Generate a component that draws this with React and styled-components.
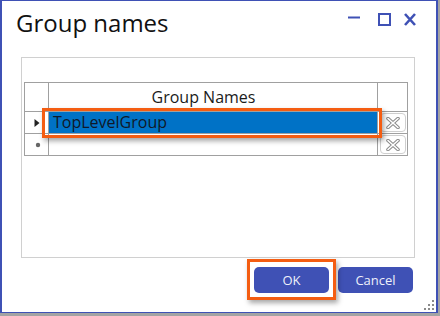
import styled, { createGlobalStyle } from 'styled-components'

const GlobalStyle = createGlobalStyle`
	html, body {
		margin: 0;
		padding: 0;
		background: #a3a3a3;
		font-family: 'Open Sans', 'Noto Sans', sans-serif;
	}
	* {
		box-sizing: border-box;
	}
`

const Window = styled.div`
	position: relative;
	width: 438px;
	height: 313px;
	background: #fff;
	border-style: solid;
	border-color: #3f51b5;
	border-width: 1px 2px;
	display: flex;
	flex-direction: column;
`

const TitleBar = styled.div`
	display: flex;
	justify-content: space-between;
	align-items: flex-start;
	padding: 7px 20px 0 14px;
`

const Title = styled.h1`
	margin: 0;
	font-size: 24px;
	line-height: 30px;
	font-weight: 400;
	color: #111;
`

const Controls = styled.div`
	display: flex;
	margin-top: 5px;
`

const CtrlIcon = styled.svg`
	display: block;
	margin-right: ${(p) => p.$gap || 0}px;
`

const Panel = styled.div`
	margin: 19px 0 0 19px;
	width: 394px;
	height: 201px;
	border: 1px solid #d0d0d0;
	padding: 24px 6px 0 2px;
`

const Grid = styled.div`
	display: grid;
	grid-template-columns: 24px 329px 30px;
	grid-template-rows: 29px 22px 22px;
	width: 384px;
	border-top: 1px solid #a0a0a0;
	border-left: 1px solid #a0a0a0;
`

const Cell = styled.div`
	position: relative;
	border-right: 1px solid #a0a0a0;
	border-bottom: 1px solid #a0a0a0;
	background: #fff;
	display: flex;
	align-items: center;
	justify-content: center;
`

const HeaderCell = styled(Cell)`
	font-size: 16px;
	line-height: 28px;
	color: #1a1a1a;
	padding-right: 19px;
`

const ValueCell = styled(Cell)`
	justify-content: flex-start;
	padding-left: 4px;
	font-size: 16px;
	line-height: 21px;
	color: #101828;
	background: ${(p) => (p.$selected ? '#0072c6' : '#fff')};
`

const DeleteButton = styled.button`
	width: 26px;
	height: 19px;
	margin: 1px 0 0 1px;
	align-self: flex-start;
	padding: 0;
	border: 1px solid #cfcfcf;
	border-radius: 4px;
	background: #fff;
	display: flex;
	align-items: center;
	justify-content: center;
`

const Highlight = styled.div`
	position: absolute;
	left: ${(p) => p.$l}px;
	top: ${(p) => p.$t}px;
	right: ${(p) => p.$r}px;
	bottom: ${(p) => p.$b}px;
	border: 3px solid #f45d12;
	box-shadow: 2px 3px 5px rgba(0, 0, 0, 0.35);
	pointer-events: none;
	z-index: 2;
`

const Footer = styled.div`
	display: flex;
	justify-content: flex-end;
	gap: 9px;
	margin-top: 9px;
	padding-right: 23px;
`

const ActionButton = styled.button`
	position: relative;
	width: 75px;
	height: 26px;
	border: none;
	border-radius: 5px;
	background: #3f51b5;
	color: #eef0fa;
	font-family: 'Open Sans', 'Noto Sans', sans-serif;
	font-size: 13px;
	padding: 0;
`

const Grip = styled.svg`
	position: absolute;
	right: 1px;
	bottom: 1px;
`

const XGlyph = () => (
	<svg width='14' height='12' viewBox='0 0 14 12'>
		<path d='M2 1.5 L12 10.5 M12 1.5 L2 10.5' stroke='#8a8a8a' strokeWidth='3.6' strokeLinecap='round' />
		<path d='M2 1.5 L12 10.5 M12 1.5 L2 10.5' stroke='#fff' strokeWidth='1.6' strokeLinecap='round' />
	</svg>
)

export default function App() {
	return (
		<>
			<GlobalStyle />
			<Window>
				<TitleBar>
					<Title>Group names</Title>
					<Controls>
						<CtrlIcon width='12' height='13' viewBox='0 0 12 13' $gap={18}>
							<path d='M0 4.5 H12' stroke='#3f51b5' strokeWidth='2' />
						</CtrlIcon>
						<CtrlIcon width='13' height='13' viewBox='0 0 13 13' $gap={13}>
							<rect x='1' y='1' width='11' height='11' fill='none' stroke='#3f51b5' strokeWidth='2' />
						</CtrlIcon>
						<CtrlIcon width='12' height='13' viewBox='0 0 12 13'>
							<path d='M1 1 L11 12 M11 1 L1 12' stroke='#3f51b5' strokeWidth='2.6' />
						</CtrlIcon>
					</Controls>
				</TitleBar>

				<Panel>
					<Grid>
						<HeaderCell />
						<HeaderCell>Group Names</HeaderCell>
						<HeaderCell />

						<Cell>
							<svg width='6' height='8' viewBox='0 0 6 8'>
								<path d='M0.5 0 L5.5 4 L0.5 8 Z' fill='#222' />
							</svg>
						</Cell>
						<ValueCell $selected>
							TopLevelGroup
							<Highlight $l={-7} $t={-4} $r={-5} $b={-5} />
						</ValueCell>
						<Cell>
							<DeleteButton>
								<XGlyph />
							</DeleteButton>
						</Cell>

						<Cell>
							<svg width='6' height='6' viewBox='0 0 6 6' style={{ marginLeft: 3 }}>
								<circle cx='3' cy='3' r='2.2' fill='#666' />
							</svg>
						</Cell>
						<ValueCell />
						<Cell>
							<DeleteButton>
								<XGlyph />
							</DeleteButton>
						</Cell>
					</Grid>
				</Panel>

				<Footer>
					<ActionButton>
						OK
						<Highlight $l={-7} $t={-8} $r={-7} $b={-7} />
					</ActionButton>
					<ActionButton>Cancel</ActionButton>
				</Footer>

				<Grip width='12' height='12' viewBox='0 0 12 12'>
					<rect x='9' y='1' width='2' height='2' fill='#8a8a8a' />
					<rect x='5' y='5' width='2' height='2' fill='#8a8a8a' />
					<rect x='9' y='5' width='2' height='2' fill='#8a8a8a' />
					<rect x='1' y='9' width='2' height='2' fill='#8a8a8a' />
					<rect x='5' y='9' width='2' height='2' fill='#8a8a8a' />
					<rect x='9' y='9' width='2' height='2' fill='#8a8a8a' />
				</Grip>
			</Window>
		</>
	)
}
